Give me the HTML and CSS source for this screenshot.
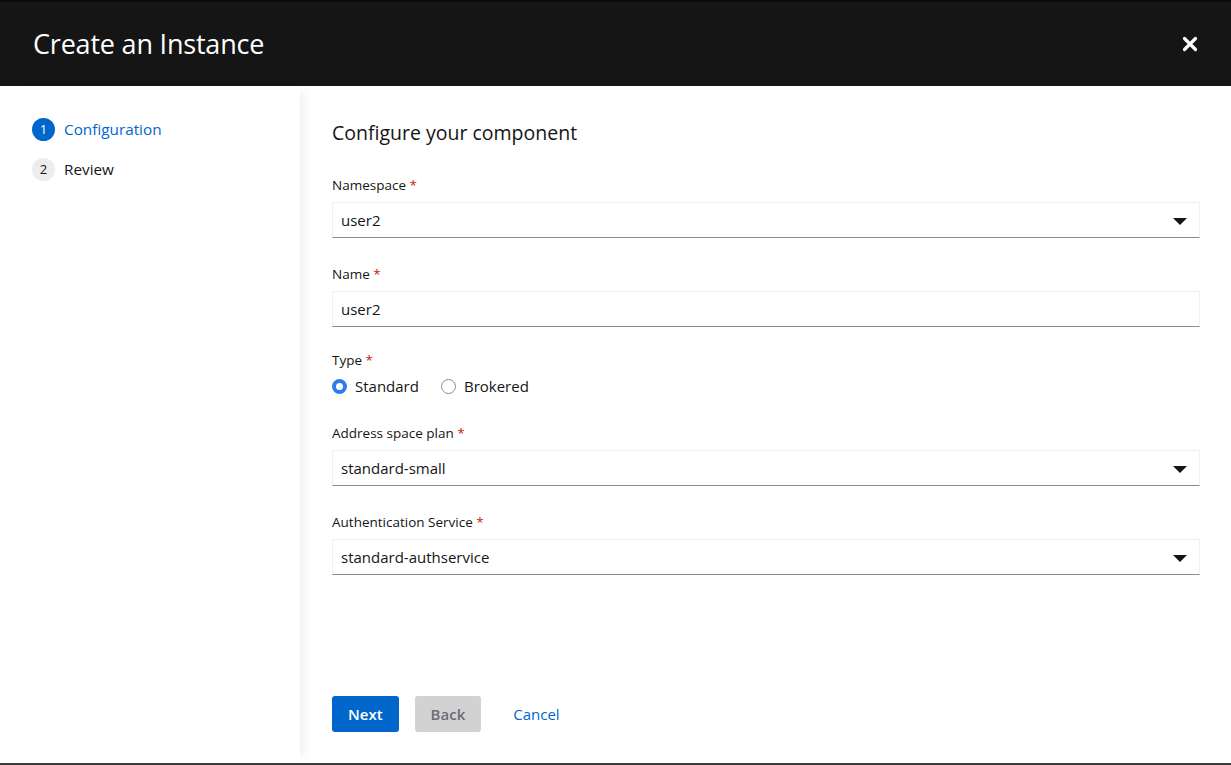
FILE: index.html
```html
<!DOCTYPE html>
<html>
<head>
<meta charset="utf-8">
<link rel="stylesheet" href="styles.css">
</head>
<body>
<div class="modal">
  <header class="modal-header">
    <h1 class="modal-title">Create an Instance</h1>
    <button class="close-btn" aria-label="Close">
      <svg width="16" height="16" viewBox="0 0 16 16"><path d="M2.5 2.5 L13.5 13.5 M13.5 2.5 L2.5 13.5" stroke="#fff" stroke-width="3.2" stroke-linecap="round"/></svg>
    </button>
  </header>
  <div class="wizard">
    <nav class="wizard-nav">
      <div class="step current"><span class="step-num">1</span><span class="step-label">Configuration</span></div>
      <div class="step"><span class="step-num">2</span><span class="step-label">Review</span></div>
    </nav>
    <main class="wizard-main">
      <div class="wizard-body">
        <h2 class="section-title">Configure your component</h2>
        <div class="form-group">
          <label class="label">Namespace <span class="req">*</span></label>
          <div class="control select"><span>user2</span><span class="caret"></span></div>
        </div>
        <div class="form-group group-tight">
          <label class="label">Name <span class="req">*</span></label>
          <div class="control"><span>user2</span></div>
        </div>
        <div class="form-group">
          <label class="label type-label">Type <span class="req">*</span></label>
          <div class="radios">
            <label class="radio"><span class="radio-dot checked"></span>Standard</label>
            <label class="radio"><span class="radio-dot"></span>Brokered</label>
          </div>
        </div>
        <div class="form-group">
          <label class="label">Address space plan <span class="req">*</span></label>
          <div class="control select"><span>standard-small</span><span class="caret"></span></div>
        </div>
        <div class="form-group">
          <label class="label">Authentication Service <span class="req">*</span></label>
          <div class="control select"><span>standard-authservice</span><span class="caret"></span></div>
        </div>
      </div>
      <footer class="wizard-footer">
        <button class="btn btn-primary">Next</button>
        <button class="btn btn-disabled">Back</button>
        <button class="btn btn-link">Cancel</button>
      </footer>
    </main>
  </div>
</div>
</body>
</html>
```

FILE: styles.css
```css
* { box-sizing: border-box; }
html, body { margin: 0; padding: 0; height: 100%; }
body {
  font-family: "Open Sans", "Noto Sans", "Liberation Sans", sans-serif;
  color: #151515;
  background: #fff;
}
.modal {
  height: 765px;
  display: flex;
  flex-direction: column;
  border-bottom: 2px solid #3c3c3c;
}
.modal-header {
  height: 86px;
  background: #151515;
  border-top: 2px solid #0b0b0b;
  display: flex;
  align-items: center;
  justify-content: space-between;
  padding: 0 33px 0 33px;
  flex-shrink: 0;
}
.modal-title {
  margin: 0;
  color: #fff;
  font-weight: 400;
  font-size: 27px;
  letter-spacing: -0.2px;
  padding-bottom: 2px;
}
.close-btn {
  background: none;
  border: 0;
  padding: 0;
  width: 17px;
  height: 17px;
  display: flex;
  align-items: center;
  justify-content: center;
}
.wizard {
  flex: 1;
  display: flex;
  min-height: 0;
}
.wizard-nav {
  width: 300px;
  flex-shrink: 0;
  padding: 31px 0 0 32px;
  background: #fff;
  position: relative;
  z-index: 1;
  box-shadow: 10px 0 12px -8px rgba(0,0,0,0.09);
  display: flex;
  flex-direction: column;
  gap: 16px;
}
.step {
  display: flex;
  align-items: center;
  gap: 9px;
  font-size: 15.3px;
  height: 24px;
}
.step-num {
  width: 23px;
  height: 23px;
  border-radius: 50%;
  background: #ededed;
  color: #151515;
  font-size: 13px;
  display: flex;
  align-items: center;
  justify-content: center;
}
.step.current .step-num { background: #0066cc; color: #fff; }
.step.current .step-label { color: #0066cc; }
.wizard-main {
  flex: 1;
  display: flex;
  flex-direction: column;
  justify-content: space-between;
  padding: 32px 31px 31px 32px;
}
.section-title {
  margin: 0 0 27px;
  font-size: 19.5px;
  font-weight: 400;
  line-height: 30px;
}
.form-group { margin-bottom: 26px; }
.form-group.group-tight { margin-bottom: 23px; }
.label {
  display: block;
  font-size: 13.5px;
  line-height: 21px;
  margin-bottom: 6px;
}
.type-label { margin-bottom: 4px; }
.req { color: #c9190b; }
.control {
  height: 36px;
  border: 1px solid #f0f0f0;
  border-bottom-color: #8a8d90;
  display: flex;
  align-items: center;
  justify-content: space-between;
  padding: 0 12px 0 8px;
  font-size: 15px;
}
.caret {
  width: 0; height: 0;
  border-left: 7px solid transparent;
  border-right: 7px solid transparent;
  border-top: 7px solid #151515;
  margin-top: 2px;
}
.radios {
  display: flex;
  gap: 22px;
  font-size: 15px;
  line-height: 22px;
}
.radio { display: flex; align-items: center; gap: 8px; }
.radio-dot {
  width: 15px; height: 15px;
  border-radius: 50%;
  border: 1px solid #8a8d90;
  background: #fff;
}
.radio-dot.checked {
  border: 4.5px solid #2b7de9;
  background: #fff;
}
.wizard-footer {
  display: flex;
  align-items: center;
  gap: 16px;
}
.btn {
  font-family: inherit;
  font-size: 15px;
  font-weight: 600;
  border: 0;
  border-radius: 3px;
  height: 36px;
  padding: 0 16px;
}
.btn-primary { background: #0066cc; color: #fff; }
.btn-disabled { background: #d2d2d2; color: #6a6e73; }
.btn-link { background: none; color: #0066cc; font-weight: 500; }
```
